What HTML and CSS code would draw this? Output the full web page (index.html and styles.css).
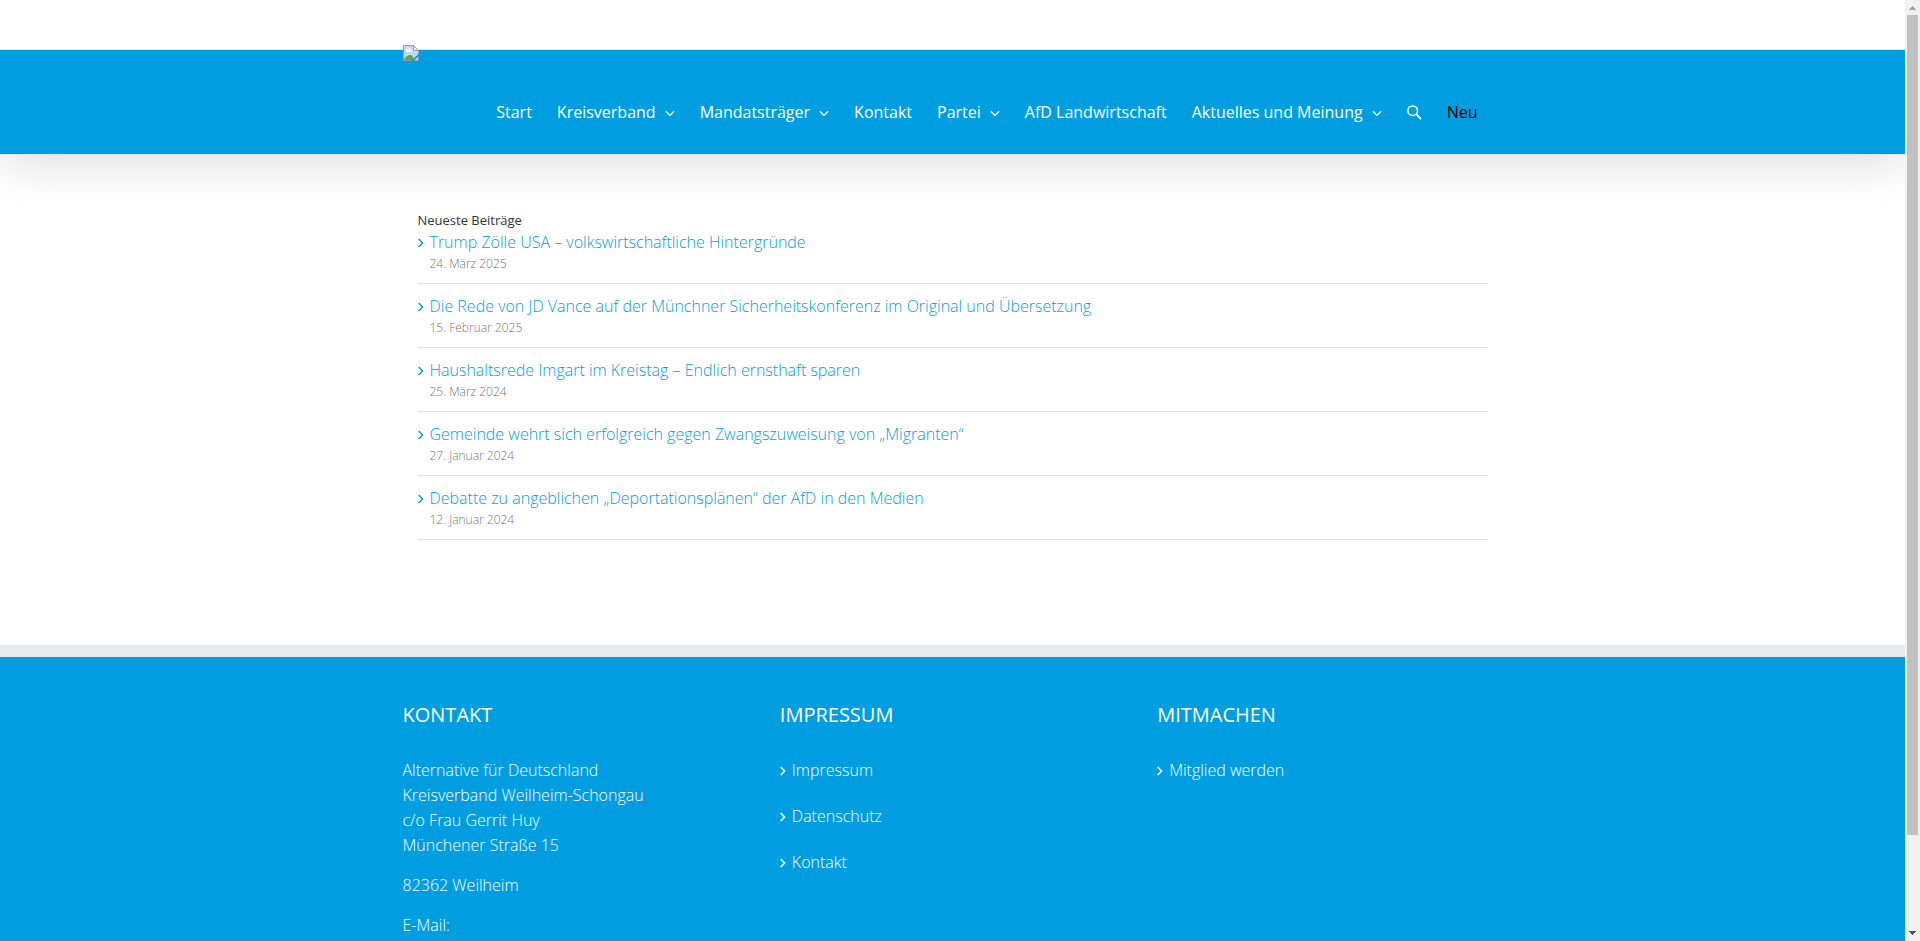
FILE: index.html
```html
<!DOCTYPE html>
<html lang="de">
<head>
<meta charset="utf-8">
<title>AfD Kreisverband Weilheim-Schongau</title>
<link rel="stylesheet" href="styles.css">
</head>
<body>
<svg width="0" height="0" class="defs" aria-hidden="true">
  <symbol id="down" viewBox="0 0 11 7"><path d="M1 1l4.500 4.500L10 1" fill="none" stroke="currentColor" stroke-width="1.300"/></symbol>
  <symbol id="right" viewBox="0 0 6 10"><path d="M.7 1l3.900 4-3.900 4" fill="none" stroke="currentColor" stroke-width="1.500"/></symbol>
</svg>
<div class="page">
  <header class="header">
    <div class="container header-row">
      <a class="logo" href="#" aria-label="Startseite">
        <svg width="16" height="16" viewBox="0 0 16 16">
          <path d="M.5.5h10l5 5v10H.5z" fill="#c5d8f6" stroke="#9a9a9a"/>
          <path d="M3 6a1.500 1.500 0 0 1 2-2 1.600 1.600 0 0 1 3 1 1 1 0 0 1 0 2H3z" fill="#fff"/>
          <path d="M1 15c2-4 4-5 6-5s3 1 4 5z" fill="#5aaa3c"/>
          <path d="M10.500.5v5h5z" fill="#fff" stroke="#9a9a9a"/>
          <path d="M16 8.500L8 16h2.500L16 11z" fill="#009ee0"/>
        </svg>
      </a>
      <nav class="nav">
        <a href="#">Start</a>
        <a href="#">Kreisverband <svg class="down"><use href="#down"/></svg></a>
        <a href="#">Mandatsträger <svg class="down"><use href="#down"/></svg></a>
        <a href="#">Kontakt</a>
        <a href="#">Partei <svg class="down"><use href="#down"/></svg></a>
        <a href="#">AfD Landwirtschaft</a>
        <a href="#">Aktuelles und Meinung <svg class="down"><use href="#down"/></svg></a>
        <button class="search" type="button" aria-label="Suche"><svg width="15" height="15" viewBox="0 0 15 15" fill="none" stroke="currentColor"><circle cx="5.700" cy="5.700" r="4.800" stroke-width="1.500"/><path d="M9.200 9.200l4.800 4.800" stroke-width="1.800"/></svg></button>
        <a class="neu" href="#">Neu</a>
      </nav>
    </div>
  </header>
  <main class="main container">
    <h2>Neueste Beiträge</h2>
    <ul class="posts">
      <li><svg class="right"><use href="#right"/></svg><div><a href="#">Trump Zölle USA – volkswirtschaftliche Hintergründe</a><time>24. März 2025</time></div></li>
      <li><svg class="right"><use href="#right"/></svg><div><a href="#">Die Rede von JD Vance auf der Münchner Sicherheitskonferenz im Original und Übersetzung</a><time>15. Februar 2025</time></div></li>
      <li><svg class="right"><use href="#right"/></svg><div><a href="#">Haushaltsrede Imgart im Kreistag – Endlich ernsthaft sparen</a><time>25. März 2024</time></div></li>
      <li><svg class="right"><use href="#right"/></svg><div><a href="#">Gemeinde wehrt sich erfolgreich gegen Zwangszuweisung von „Migranten“</a><time>27. Januar 2024</time></div></li>
      <li><svg class="right"><use href="#right"/></svg><div><a href="#">Debatte zu angeblichen „Deportationsplänen“ der AfD in den Medien</a><time>12. Januar 2024</time></div></li>
    </ul>
  </main>
  <footer class="footer">
    <div class="container columns">
      <section>
        <h3>KONTAKT</h3>
        <p>Alternative für Deutschland<br>Kreisverband Weilheim-Schongau<br>c/o Frau Gerrit Huy<br>Münchener Straße 15</p>
        <p>82362 Weilheim</p>
        <p>E-Mail:</p>
      </section>
      <section>
        <h3>IMPRESSUM</h3>
        <ul class="links">
          <li><svg class="right"><use href="#right"/></svg><a href="#">Impressum</a></li>
          <li><svg class="right"><use href="#right"/></svg><a href="#">Datenschutz</a></li>
          <li><svg class="right"><use href="#right"/></svg><a href="#">Kontakt</a></li>
        </ul>
      </section>
      <section>
        <h3>MITMACHEN</h3>
        <ul class="links">
          <li><svg class="right"><use href="#right"/></svg><a href="#">Mitglied werden</a></li>
        </ul>
      </section>
    </div>
  </footer>
</div>
<div class="scrollbar" aria-hidden="true">
  <svg width="7" height="4" viewBox="0 0 7 4" shape-rendering="crispEdges"><path d="M3 0h1v1h1v1h1v1h1v1H0V3h1V2h1V1h1z" fill="#a3a3a3"/></svg>
  <div class="track"><div class="thumb"></div></div>
  <svg width="7" height="4" viewBox="0 0 7 4" shape-rendering="crispEdges"><path d="M0 0h7v1H6v1H5v1H4v1H3V3H2V2H1V1H0z" fill="#505050"/></svg>
</div>
</body>
</html>
```
FILE: styles.css
```css
* { box-sizing: border-box; }
body {
  margin: 0;
  height: 100vh;
  overflow: hidden;
  display: flex;
  background: #fff;
  font: 300 16px/25px "Open Sans", sans-serif;
}
h2, h3, p, ul { margin: 0; padding: 0; }
ul { list-style: none; }
a { color: inherit; text-decoration: none; }
.defs { position: absolute; }
.page {
  flex: 1;
  min-width: 0;
  display: flex;
  flex-direction: column;
  overflow: hidden;
}
.container { width: 100%; max-width: 1100px; margin: 0 auto; }

.header {
  margin-top: 49px;
  border-top: 1px solid #e5e5e5;
  border-bottom: 1px solid #e5e5e5;
  background: #009ee0;
  background-clip: padding-box;
  box-shadow: 0 10px 50px -2px rgba(0, 0, 0, 0.14);
}
.header::before {
  content: "";
  display: block;
  height: 49px;
  margin-top: -50px;
  margin-bottom: 1px;
  background: #fff;
}
.header-row { display: flex; justify-content: space-between; align-items: flex-start; }
.logo { margin-top: -5px; }
.logo svg { display: block; }
.nav {
  display: flex;
  align-items: center;
  gap: 25px;
  padding: 50px 25px 30px 0;
  color: #fff;
  font-weight: 400;
  line-height: 24px;
}
.nav a { display: flex; align-items: center; gap: 9px; white-space: nowrap; }
.nav .neu { color: #000; }
.down { width: 10px; height: 7px; margin-top: 3px; }
.search { display: block; padding: 0; border: 0; background: none; color: inherit; }
.search svg { display: block; }

.main { padding: 55px 15px 105px; }
.main h2 { color: #333; font-size: 13px; font-weight: 400; line-height: 20px; }
.posts li, .links li { display: flex; gap: 6px; }
.posts li { padding: 10px 0; border-bottom: 1px solid #e0dede; color: #009ee0; }
.posts li:first-child { padding-top: 0; }
.posts a { display: block; }
.posts time { display: block; color: #747474; font-size: 12px; line-height: 18px; }
.right { flex: none; width: 6px; height: 10px; margin-top: 8px; }

.footer {
  flex: 1 0 auto;
  border-top: 12px solid #e9eaee;
  padding: 43px 0;
  background: #009ee0;
  color: #fff;
}
.columns { display: grid; grid-template-columns: repeat(3, 1fr); gap: 32px; }
.footer h3 { margin-bottom: 28px; font-size: 20px; font-weight: 400; line-height: 30px; }
.footer p { margin-bottom: 15px; }
.links { display: grid; gap: 21px; }

.scrollbar {
  flex: none;
  width: 15px;
  padding: 6px 0;
  display: flex;
  flex-direction: column;
  align-items: center;
  gap: 5px;
  background: #f1f1f1;
}
.track { flex: 1; width: 11px; }
.thumb { height: 90%; background: #c1c1c1; }
```
